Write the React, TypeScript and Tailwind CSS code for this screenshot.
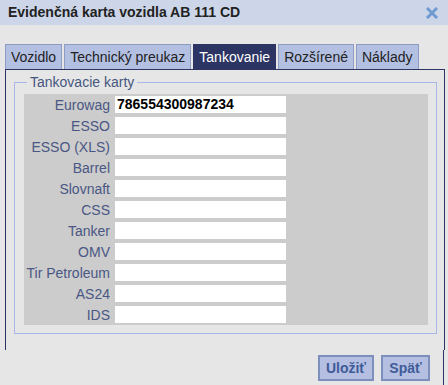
const cards = [
  { name: 'Eurowag', value: '786554300987234' },
  { name: 'ESSO', value: '' },
  { name: 'ESSO (XLS)', value: '' },
  { name: 'Barrel', value: '' },
  { name: 'Slovnaft', value: '' },
  { name: 'CSS', value: '' },
  { name: 'Tanker', value: '' },
  { name: 'OMV', value: '' },
  { name: 'Tir Petroleum', value: '' },
  { name: 'AS24', value: '' },
  { name: 'IDS', value: '' },
];

const tabs = ['Vozidlo', 'Technický preukaz', 'Tankovanie', 'Rozšírené', 'Náklady'];

const App = () => {
  return (
    <div className="w-[448px] h-[385px] bg-[#e6e6e6] overflow-hidden font-['Liberation_Sans',Arial,sans-serif] text-[14px]">
      {/* Title bar */}
      <div className="h-[25px] bg-[#cdd6e8] flex items-center justify-between pl-[8px] pr-[10px]">
        <span className="font-bold text-[#222]">Evidenčná karta vozidla AB 111 CD</span>
        <svg width="12" height="12" viewBox="0 0 12 12">
          <path d="M2 2 L10 10 M10 2 L2 10" stroke="#6f9bd2" strokeWidth="3" strokeLinecap="square" />
        </svg>
      </div>

      {/* Tabs */}
      <div className="mt-[19px] pl-[5px] flex gap-[2px] h-[25px]">
        {tabs.map((t) => (
          <div
            key={t}
            className={
              t === 'Tankovanie'
                ? 'h-[25px] px-[5px] flex items-center border border-b-0 border-[#2b3462] bg-[#2b3462] text-white'
                : 'h-[25px] px-[5px] flex items-center border border-b-0 border-[#8c9cc5] bg-[#b4c0e2] text-[#222]'
            }
          >
            {t}
          </div>
        ))}
      </div>

      {/* Panel */}
      <div className="ml-[5px] w-[440px] h-[281px] border-l border-t border-r border-[#2b3462] pt-[4px]">
        <fieldset className="ml-[8px] w-[423px] border border-[#a9b6e8] pb-[8px]">
          <legend className="ml-[12px] px-[3px] text-[#46577e] leading-[16px]">Tankovacie karty</legend>
          <div className="mt-[4px] ml-[9px] w-[404px] bg-[#cccccc] py-0">
            {cards.map((c) => (
              <div key={c.name} className="h-[21px] flex items-center">
                <div className="w-[88px] pr-[2px] text-right text-[#4a5784] leading-[16px]">{c.name}</div>
                <div className="ml-[3px] w-[171px] h-[17px] bg-white pl-[2px] font-bold text-black leading-[17px]">
                  {c.value}
                </div>
              </div>
            ))}
          </div>
        </fieldset>
      </div>

      {/* Buttons */}
      <div className="w-[444px] h-[35px] border-r border-[#2b3462] flex justify-end gap-[7px] pt-[5px] pr-[13px]">
        <button className="w-[56px] h-[26px] bg-[#b4bfe2] border-2 border-[#7d90bd] font-bold text-[#3f5b98]">Uložiť</button>
        <button className="w-[49px] h-[26px] bg-[#b4bfe2] border-2 border-[#7d90bd] font-bold text-[#3f5b98]">Späť</button>
      </div>
    </div>
  );
};

export default App;
